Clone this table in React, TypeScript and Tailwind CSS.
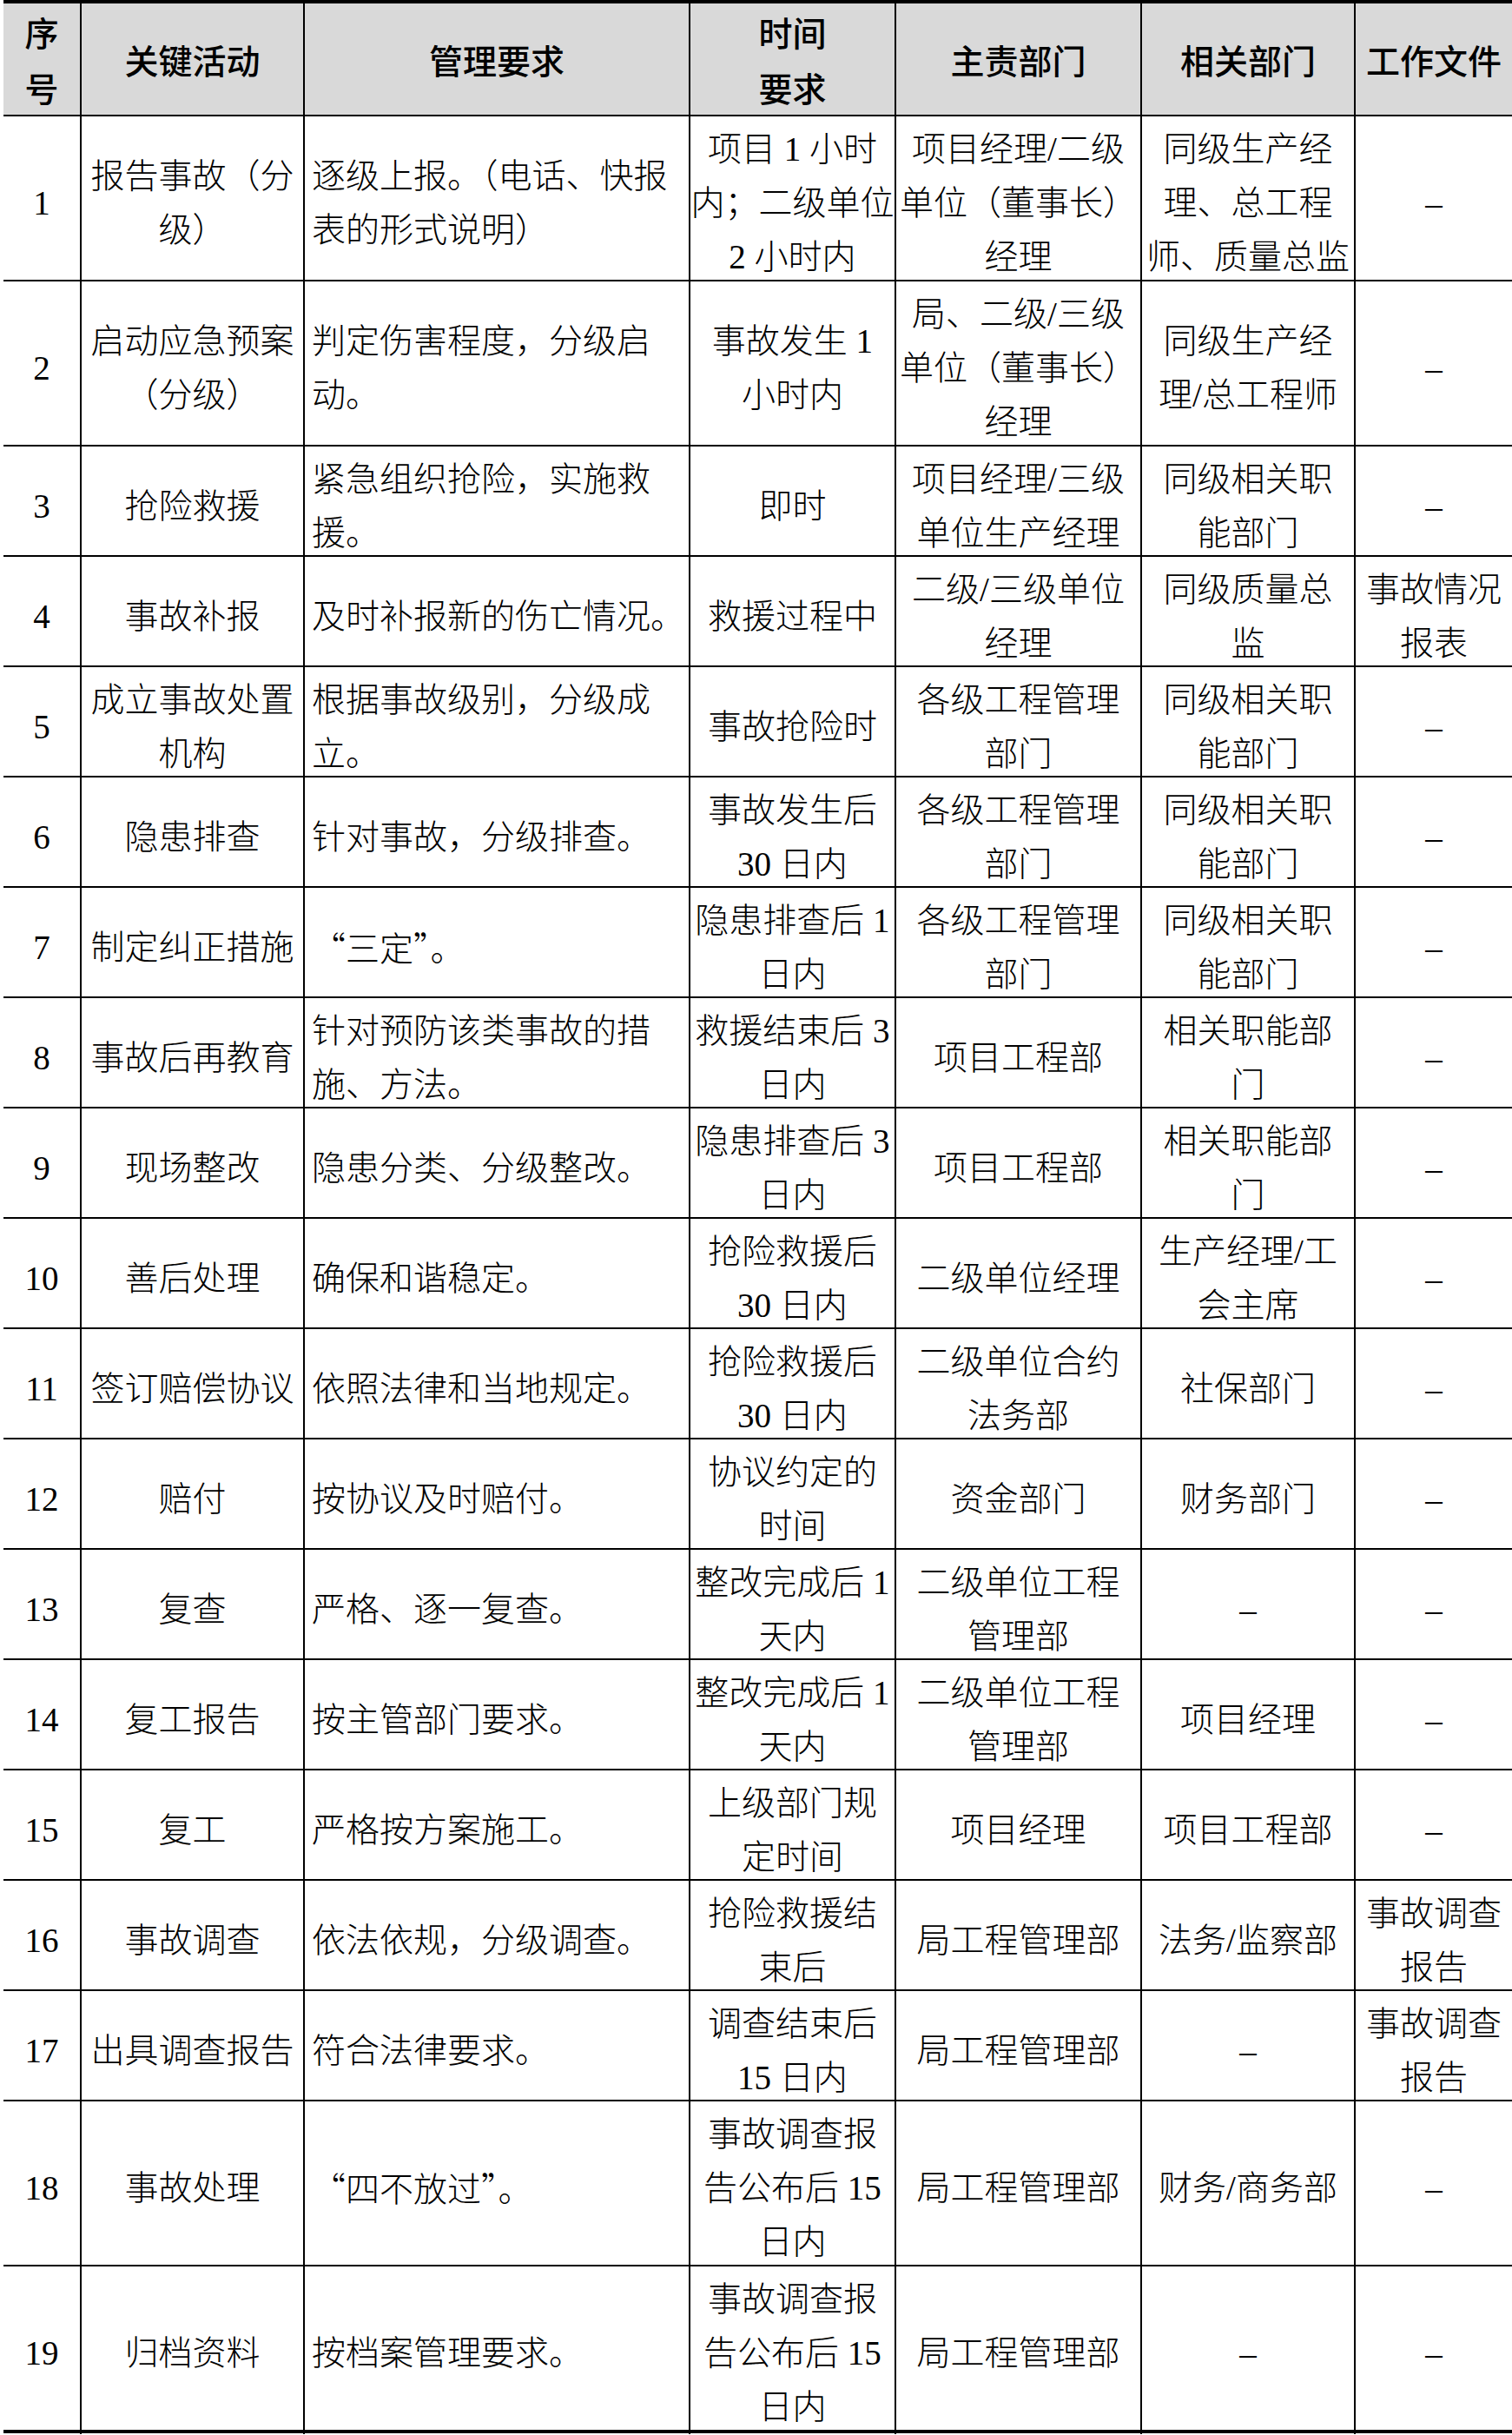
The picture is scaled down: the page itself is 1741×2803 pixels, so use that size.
import type { ReactNode } from "react";

type Row = {
  no: string;
  tall?: boolean;
  cells: string[][];
};

const HEADER: string[][] = [
  ["序", "号"],
  ["关键活动"],
  ["管理要求"],
  ["时间", "要求"],
  ["主责部门"],
  ["相关部门"],
  ["工作文件"],
];

const DASH = "–";

const ROWS: Row[] = [
  {
    no: "1",
    tall: true,
    cells: [
      ["报告事故（分", "级）"],
      ["逐级上报。（电话、快报", "表的形式说明）"],
      ["项目 1 小时", "内；二级单位", "2 小时内"],
      ["项目经理/二级", "单位（董事长）", "经理"],
      ["同级生产经", "理、总工程", "师、质量总监"],
      [DASH],
    ],
  },
  {
    no: "2",
    tall: true,
    cells: [
      ["启动应急预案", "（分级）"],
      ["判定伤害程度，分级启", "动。"],
      ["事故发生 1", "小时内"],
      ["局、二级/三级", "单位（董事长）", "经理"],
      ["同级生产经", "理/总工程师"],
      [DASH],
    ],
  },
  {
    no: "3",
    cells: [
      ["抢险救援"],
      ["紧急组织抢险，实施救", "援。"],
      ["即时"],
      ["项目经理/三级", "单位生产经理"],
      ["同级相关职", "能部门"],
      [DASH],
    ],
  },
  {
    no: "4",
    cells: [
      ["事故补报"],
      ["及时补报新的伤亡情况。"],
      ["救援过程中"],
      ["二级/三级单位", "经理"],
      ["同级质量总", "监"],
      ["事故情况", "报表"],
    ],
  },
  {
    no: "5",
    cells: [
      ["成立事故处置", "机构"],
      ["根据事故级别，分级成", "立。"],
      ["事故抢险时"],
      ["各级工程管理", "部门"],
      ["同级相关职", "能部门"],
      [DASH],
    ],
  },
  {
    no: "6",
    cells: [
      ["隐患排查"],
      ["针对事故，分级排查。"],
      ["事故发生后", "30 日内"],
      ["各级工程管理", "部门"],
      ["同级相关职", "能部门"],
      [DASH],
    ],
  },
  {
    no: "7",
    cells: [
      ["制定纠正措施"],
      ["“三定”。"],
      ["隐患排查后 1", "日内"],
      ["各级工程管理", "部门"],
      ["同级相关职", "能部门"],
      [DASH],
    ],
  },
  {
    no: "8",
    cells: [
      ["事故后再教育"],
      ["针对预防该类事故的措", "施、方法。"],
      ["救援结束后 3", "日内"],
      ["项目工程部"],
      ["相关职能部", "门"],
      [DASH],
    ],
  },
  {
    no: "9",
    cells: [
      ["现场整改"],
      ["隐患分类、分级整改。"],
      ["隐患排查后 3", "日内"],
      ["项目工程部"],
      ["相关职能部", "门"],
      [DASH],
    ],
  },
  {
    no: "10",
    cells: [
      ["善后处理"],
      ["确保和谐稳定。"],
      ["抢险救援后", "30 日内"],
      ["二级单位经理"],
      ["生产经理/工", "会主席"],
      [DASH],
    ],
  },
  {
    no: "11",
    cells: [
      ["签订赔偿协议"],
      ["依照法律和当地规定。"],
      ["抢险救援后", "30 日内"],
      ["二级单位合约", "法务部"],
      ["社保部门"],
      [DASH],
    ],
  },
  {
    no: "12",
    cells: [
      ["赔付"],
      ["按协议及时赔付。"],
      ["协议约定的", "时间"],
      ["资金部门"],
      ["财务部门"],
      [DASH],
    ],
  },
  {
    no: "13",
    cells: [
      ["复查"],
      ["严格、逐一复查。"],
      ["整改完成后 1", "天内"],
      ["二级单位工程", "管理部"],
      [DASH],
      [DASH],
    ],
  },
  {
    no: "14",
    cells: [
      ["复工报告"],
      ["按主管部门要求。"],
      ["整改完成后 1", "天内"],
      ["二级单位工程", "管理部"],
      ["项目经理"],
      [DASH],
    ],
  },
  {
    no: "15",
    cells: [
      ["复工"],
      ["严格按方案施工。"],
      ["上级部门规", "定时间"],
      ["项目经理"],
      ["项目工程部"],
      [DASH],
    ],
  },
  {
    no: "16",
    cells: [
      ["事故调查"],
      ["依法依规，分级调查。"],
      ["抢险救援结", "束后"],
      ["局工程管理部"],
      ["法务/监察部"],
      ["事故调查", "报告"],
    ],
  },
  {
    no: "17",
    cells: [
      ["出具调查报告"],
      ["符合法律要求。"],
      ["调查结束后", "15 日内"],
      ["局工程管理部"],
      [DASH],
      ["事故调查", "报告"],
    ],
  },
  {
    no: "18",
    tall: true,
    cells: [
      ["事故处理"],
      ["“四不放过”。"],
      ["事故调查报", "告公布后 15", "日内"],
      ["局工程管理部"],
      ["财务/商务部"],
      [DASH],
    ],
  },
  {
    no: "19",
    tall: true,
    cells: [
      ["归档资料"],
      ["按档案管理要求。"],
      ["事故调查报", "告公布后 15", "日内"],
      ["局工程管理部"],
      [DASH],
      [DASH],
    ],
  },
];

// Curly quotes come out narrow in Liberation Serif; the source uses full-width ones.
function renderLine(line: string): ReactNode {
  const parts = line.split(/([“”])/);
  return parts.map((part, i) =>
    part === "“" || part === "”" ? (
      <span key={i} className="font-['Noto_Sans_CJK_SC']">
        {part}
      </span>
    ) : (
      part
    )
  );
}

const GRID = "grid grid-cols-[90px_257px_444px_237px_283px_246px_180px]";

function Cell({
  lines,
  last,
  left,
  head,
}: {
  lines: string[];
  last?: boolean;
  left?: boolean;
  head?: boolean;
}) {
  return (
    <div
      className={`flex flex-col justify-center ${head ? "leading-[64px]" : "pt-[7px]"} ${
        left ? "items-start px-2" : "items-center"
      } ${last ? "" : "border-r-2 border-black"}`}
    >
      {lines.map((line, i) => (
        <div key={i} className="whitespace-nowrap">
          {renderLine(line)}
        </div>
      ))}
    </div>
  );
}

export default function App() {
  return (
    <div className="min-h-[2803px] bg-white pl-[4px] text-black">
      <div className="w-[1737px] border-y-4 border-black font-['Liberation_Serif','Noto_Sans_CJK_SC',serif] text-[39px] font-light leading-[62px]">
        <div
          className={`${GRID} h-[130px] border-b-2 border-black bg-[#d9d9d9] font-['Noto_Sans_CJK_SC',sans-serif] font-medium`}
        >
          {HEADER.map((lines, i) => (
            <Cell key={i} lines={lines} head last={i === HEADER.length - 1} />
          ))}
        </div>
        {ROWS.map((row, r) => {
          const isLast = r === ROWS.length - 1;
          const height = row.tall ? (isLast ? "h-[188px]" : "h-[190px]") : "h-[127px]";
          return (
            <div
              key={row.no}
              className={`${GRID} ${height} ${isLast ? "" : "border-b-2 border-black"}`}
            >
              <Cell lines={[row.no]} />
              {row.cells.map((lines, i) => (
                <Cell
                  key={i}
                  lines={lines}
                  left={i === 1}
                  last={i === row.cells.length - 1}
                />
              ))}
            </div>
          );
        })}
      </div>
    </div>
  );
}
